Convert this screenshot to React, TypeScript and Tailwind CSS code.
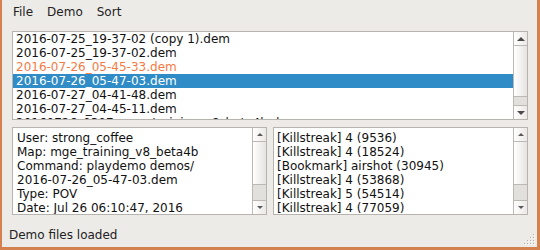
import React from "react";

const Up = ({ w = 8, h = 4, c = "#4a4a4a" }: { w?: number; h?: number; c?: string }) => (
  <svg width={w} height={h} viewBox={`0 0 ${w} ${h}`}>
    <polygon points={`${w / 2},0 ${w},${h} 0,${h}`} fill={c} />
  </svg>
);
const Down = ({ w = 8, h = 4, c = "#4a4a4a" }: { w?: number; h?: number; c?: string }) => (
  <svg width={w} height={h} viewBox={`0 0 ${w} ${h}`}>
    <polygon points={`0,0 ${w},0 ${w / 2},${h}`} fill={c} />
  </svg>
);

function ScrollBar({ thumb, track, small }: { thumb: number; track: number; small?: boolean }) {
  const aw = small ? 6 : 8;
  const ah = small ? 3 : 4;
  return (
    <div className="w-[14px] shrink-0 border-l border-[#bcb8b3] flex flex-col">
      <div className="h-[14px] border-b border-[#bcb8b3] bg-linear-to-r from-white to-[#ebe9e6] flex items-center justify-center">
        <Up w={aw} h={ah} c={small ? "#5a5a5a" : "#4a4a4a"} />
      </div>
      <div style={{ height: thumb }} className="border-b border-[#bcb8b3] bg-linear-to-r from-white to-[#e6e4e1]" />
      <div style={{ height: track }} className="bg-[#e2e0dc]" />
      <div className="flex-1 border-t border-[#bcb8b3] bg-linear-to-r from-white to-[#ebe9e6] flex items-center justify-center">
        <Down w={aw} h={ah} c={small ? "#5a5a5a" : "#4a4a4a"} />
      </div>
    </div>
  );
}

const files = [
  "2016-07-25_19-37-02 (copy 1).dem",
  "2016-07-25_19-37-02.dem",
  "2016-07-26_05-45-33.dem",
  "2016-07-26_05-47-03.dem",
  "2016-07-27_04-41-48.dem",
  "2016-07-27_04-45-11.dem",
  "20160726_0307_mge_training_v8_beta4b.dem",
];

const details = [
  "User: strong_coffee",
  "Map: mge_training_v8_beta4b",
  "Command: playdemo demos/",
  "2016-07-26_05-47-03.dem",
  "Type: POV",
  "Date: Jul 26 06:10:47, 2016",
];

const events = [
  "[Killstreak] 4 (9536)",
  "[Killstreak] 4 (18524)",
  "[Bookmark] airshot (30945)",
  "[Killstreak] 4 (53868)",
  "[Killstreak] 5 (54514)",
  "[Killstreak] 4 (77059)",
];

export default function App() {
  return (
    <div className="w-[540px] h-[250px] bg-[#d5804f] pl-[2px] pr-[3px] pb-[3px] flex">
      <div className="relative flex-1 flex flex-col bg-[#edebe8] font-['DejaVu_Sans',sans-serif] text-[12px] leading-[14px] text-[#111]">
        <div className="h-[24px] flex items-start pt-[5px] pl-[4px]">
          {["File", "Demo", "Sort"].map((m) => (
            <span key={m} className="px-[7px] text-[#222]">
              {m}
            </span>
          ))}
        </div>
        <div className="pt-[7px] pl-[10px] pr-[9px] flex flex-col">
          <div className="h-[89px] border border-[#b7b3ae] bg-white flex">
            <div className="flex-1 overflow-hidden">
              {files.map((f, i) => (
                <div
                  key={f}
                  className={
                    "h-[14px] pl-[3px] whitespace-nowrap " +
                    (i === 3 ? "bg-[#308cc6] text-white" : i === 2 ? "text-[#f47a45]" : "")
                  }
                >
                  {f}
                </div>
              ))}
            </div>
            <ScrollBar thumb={51} track={8} />
          </div>
          <div className="mt-[7px] grid grid-cols-2 gap-[6px]">
            <div className="h-[88px] border border-[#b7b3ae] bg-white flex">
              <div className="flex-1 overflow-hidden pl-[4px] pt-[3px] whitespace-nowrap">
                {details.map((d) => (
                  <div key={d}>{d}</div>
                ))}
              </div>
              <ScrollBar thumb={43} track={15} small />
            </div>
            <div className="h-[88px] border border-[#b7b3ae] bg-white flex">
              <div className="flex-1 overflow-hidden pl-[3px] pt-[3px] whitespace-nowrap">
                {events.map((d) => (
                  <div key={d}>{d}</div>
                ))}
              </div>
              <ScrollBar thumb={43} track={15} small />
            </div>
          </div>
        </div>
        <div className="mt-[13px] pl-[7px] text-[#222]">Demo files loaded</div>
        <svg className="absolute right-[1px] bottom-[1px]" width="12" height="12" viewBox="0 0 12 12">
          {[
            [9, 0],
            [6, 3],
            [9, 3],
            [3, 6],
            [6, 6],
            [9, 6],
            [0, 9],
            [3, 9],
            [6, 9],
            [9, 9],
          ].map(([x, y]) => (
            <g key={`${x}-${y}`}>
              <rect x={x + 1} y={y + 1} width="1" height="1" fill="#ffffff" />
              <rect x={x} y={y} width="1" height="1" fill="#b4afa8" />
            </g>
          ))}
        </svg>
      </div>
    </div>
  );
}
